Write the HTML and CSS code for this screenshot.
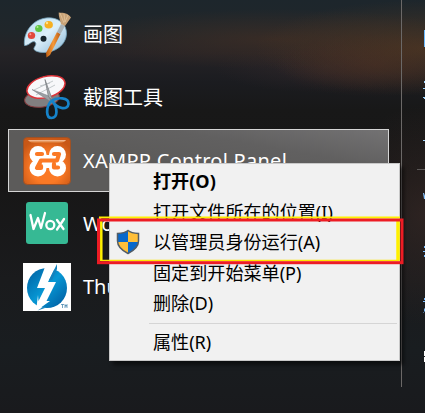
FILE: index.html
```html
<!DOCTYPE html>
<html lang="zh-CN">
<head>
<meta charset="utf-8">
<title>开始菜单</title>
<link rel="stylesheet" href="styles.css">
</head>
<body>
<div class="desktop">
  <main class="apps">
    <div class="app">
      <svg class="app-icon" viewBox="23 11 48 48">
        <defs>
          <linearGradient id="palette" x1="0" y1="0" x2="1" y2="1"><stop offset="0" stop-color="#b5dcf0"/><stop offset=".5" stop-color="#dceffa"/><stop offset="1" stop-color="#87b6d4"/></linearGradient>
          <linearGradient id="brush" x1="0" y1="0" x2="1" y2="0"><stop offset="0" stop-color="#bd5c10"/><stop offset=".5" stop-color="#f59a3a"/><stop offset="1" stop-color="#b95a14"/></linearGradient>
        </defs>
        <path d="M24.500 45.500C23 34 31 20 46 18C58 16.500 67 24 66.500 34C66 45 55 52.500 44 52.500C38 52.500 33 50.500 34 48C35 46 37 44 35 42C32 40 29 46 24.500 45.500Z" fill="url(#palette)" stroke="#719fb9" stroke-width=".8"/>
        <circle cx="43.500" cy="38.700" r="3" fill="#17242c"/>
        <ellipse cx="31.500" cy="35.500" rx="3.700" ry="3.500" fill="#e2483c"/><circle cx="30.300" cy="34.300" r="1" fill="#ffa197"/>
        <ellipse cx="38.800" cy="28.500" rx="3.700" ry="3.500" fill="#5ec342"/><circle cx="37.500" cy="27" r="1" fill="#b0ed91"/>
        <ellipse cx="48.700" cy="24.800" rx="4.200" ry="3.800" fill="#f6b022"/><circle cx="47" cy="23" r="1.200" fill="#ffe28b"/>
        <path d="M57 32L60.500 34L50 55L46.500 57.500L46 53Z" fill="url(#brush)"/>
        <path d="M61 24L65 26L60.500 34L57 32Z" fill="#a9b3b8"/>
        <path d="M61 24C60 20 58.500 16 58.700 12.500C64 13 68 13 71 17.500L65 26Z" fill="#c8a277"/>
        <path d="M60 13L64 23M64 14L65 22M68 15L65 22" stroke="#e2c59d" stroke-width=".8"/>
      </svg>
      <span class="app-name">画图</span>
    </div>
    <div class="app">
      <svg class="app-icon" viewBox="23 74 48 48">
        <ellipse cx="42" cy="98.500" rx="17.500" ry="8.500" transform="rotate(-8 42 98.500)" fill="#817f80" stroke="#863d40"/>
        <ellipse cx="46" cy="87" rx="19.500" ry="10.500" transform="rotate(-15 46 87)" fill="#f7f8fa" stroke="#dd3339" stroke-width="1.500"/>
        <path d="M34 90L53 81M36 95L55 85M40 86L50 83" stroke="#aeb4b8" stroke-width=".7" fill="none"/>
        <path d="M32 89.500L51 102L49 96Z" fill="#9b9fa3" stroke="#777b80" stroke-width=".5"/>
        <path d="M45 79.500L52.500 100L48.500 97Z" fill="#a6abad" stroke="#757a7e" stroke-width=".7"/>
        <path d="M51 101C45.500 108 46 118 51.500 118C58 118 58 108 52 100.500C58 110 68 110 68.500 104C69 97 57 97 51 101" fill="none" stroke="#1683ca" stroke-width="2.700"/>
      </svg>
      <span class="app-name">截图工具</span>
    </div>
    <div class="app selected">
      <svg class="app-icon" viewBox="0 0 48 48">
        <defs><radialGradient id="orange" cy=".65" r=".65"><stop offset=".5" stop-color="#fb7925"/><stop offset="1" stop-color="#c85716"/></radialGradient><linearGradient id="gloss" x2="0" y2="1"><stop stop-color="#f6c39f"/><stop offset="1" stop-color="#d7691d"/></linearGradient></defs>
        <rect x=".5" y=".5" width="47" height="47" rx="4" fill="url(#orange)" stroke="#9f5124"/>
        <path d="M5 3H43C41 6 37 6 34 6H14C10 6 7 6 5 3Z" fill="url(#gloss)"/>
        <g fill="#fff"><circle cx="15" cy="17.500" r="8.500"/><circle cx="34.500" cy="17.500" r="8.500"/><circle cx="15" cy="31" r="8.500"/><circle cx="34.500" cy="31" r="8.500"/><path d="M10 18H39V31H10Z"/></g>
        <path d="M14 17H19M31 17H36L34 23.500H18L14 31H18V29M35 30.500H31V27" fill="none" stroke="#fb7925" stroke-width="4.200" stroke-linejoin="round" stroke-linecap="round"/>
      </svg>
      <span class="app-name">XAMPP Control Panel</span>
    </div>
    <div class="app">
      <svg class="app-icon" viewBox="0 0 48 48">
        <rect x="3" y="2" width="42" height="42" rx="3" fill="#36b994"/>
        <g fill="none" stroke="#fff" stroke-width="2.300" stroke-linecap="round" stroke-linejoin="round"><path d="M7.500 15L10.500 29L15 18L18 28L22 13"/><ellipse cx="27.300" cy="25" rx="4" ry="4.200"/><path d="M34 20L40.500 29M41 19L34 29.500"/></g>
      </svg>
      <span class="app-name">Wox</span>
    </div>
    <div class="app">
      <svg class="app-icon" viewBox="0 0 48 48">
        <defs><linearGradient id="blue" x1="0" y1="0" x2="1" y2="1"><stop stop-color="#005e9f"/><stop offset=".5" stop-color="#0797d4"/><stop offset="1" stop-color="#00569b"/></linearGradient></defs>
        <path fill="#fff" d="M0 0H48V48H0Z"/>
        <circle cx="24" cy="25" r="20" fill="url(#blue)"/>
        <path d="M22 4L14 25H22L15.500 38L15 32L13 48L27 38L23.500 38L33 19H25L33 3Z" fill="#fff"/>
        <path d="M34 1L26 17H29L34 6ZM14.500 47.500L20 44L22 45Z" fill="#1382bd"/>
        <path d="M38 41.500H41M39.500 41.500V45M42 45V41.500L43 43.500L44 41.500V45" fill="none" stroke="#367ba7" stroke-width=".7"/>
      </svg>
      <span class="app-name">Thunder</span>
    </div>
  </main>
  <aside class="side">
    <svg class="side-edge" viewBox="401 0 24 413">
      <path d="M401.500 0V387" stroke="#6b6867"/>
      <path d="M417 169.500H425" stroke="#5d5958"/>
      <path d="M424 30H425V47H424Z" fill="#6abaff"/>
      <path d="M424 81H425V83H424ZM423 88H425V89H423ZM423 97H425V99H424V98H423ZM423 140H425V141H423Z" fill="#9ed6ff"/>
      <path d="M423 193H424L425 196V199H424Z" fill="#87c4ff"/>
      <path d="M424 246H425V248H424ZM423 251H425V252H423ZM424 255H425V257H424ZM424 298H425V300H424ZM423 301H425V302H423ZM424 309L425 308V311L423 313V312H424Z" fill="#79bdff"/>
      <path d="M424 351H425V356H424ZM424 357H425V362H424Z" fill="#fff"/>
    </svg>
  </aside>
  <div class="menu">
    <div class="item default">打开(O)</div>
    <div class="item">打开文件所在的位置(I)</div>
    <div class="item">
      <svg class="shield" viewBox="0 0 24 26">
        <defs><clipPath id="shield"><path d="M12 1.500C9 4 5 4.300 1.500 4.500V12C1.500 18 6 21.500 12 24.500C18 21.500 22.500 18 22.500 12V4.500C19 4.300 15 4 12 1.500Z"/></clipPath></defs>
        <g clip-path="url(#shield)"><path fill="#0868cb" d="M0 0H12V13H0ZM12 13H24V26H12Z"/><path fill="#ffbf39" d="M12 0H24V13H12ZM0 13H12V26H0Z"/></g>
        <path d="M12 1.500C9 4 5 4.300 1.500 4.500V12C1.500 18 6 21.500 12 24.500C18 21.500 22.500 18 22.500 12V4.500C19 4.300 15 4 12 1.500Z" fill="none" stroke="#535d66" stroke-width="1.500"/>
      </svg>
      以管理员身份运行(A)
    </div>
    <div class="item">固定到开始菜单(P)</div>
    <div class="item">删除(D)</div>
    <div class="separator"></div>
    <div class="item">属性(R)</div>
  </div>
  <svg class="marker" viewBox="96 215 310 51">
    <path d="M99 217.500H400" stroke="#fff000" stroke-width="2"/>
    <path d="M101.300 221V261" stroke="#fff000" stroke-width="2.500"/>
    <path d="M398 221V261" stroke="#fff000" stroke-width="3.500"/>
    <path d="M101 260.500H399" stroke="#ffe500" stroke-width="1.500"/>
    <rect x="98.500" y="220" width="303.500" height="42.700" fill="none" stroke="#ed1c24" stroke-width="3"/>
  </svg>
</div>
</body>
</html>
```
FILE: styles.css
```css
* { box-sizing: border-box; }
body { margin: 0; }
.desktop {
  position: relative;
  display: flex;
  width: 425px;
  height: 413px;
  overflow: hidden;
  font-family: "Noto Sans", "Noto Sans CJK SC", sans-serif;
  background:
    radial-gradient(ellipse 170px 48px at 425px 48px, rgba(82, 56, 34, .7), transparent),
    radial-gradient(ellipse 100px 32px at 375px 65px, rgba(74, 43, 35, .5), transparent),
    radial-gradient(ellipse 210px 30px at 275px 39px, rgba(68, 47, 36, .65), transparent),
    radial-gradient(ellipse 110px 25px at 325px 68px, rgba(55, 42, 44, .5), transparent),
    radial-gradient(ellipse 90px 110px at 425px 215px, rgba(56, 41, 38, .65), transparent),
    linear-gradient(#1d262c 0, #20262a 32px, #252326 53px, #1b1c20 82px, #181818 110px, #171616 180px, #1a1b1d 280px, #191d20 350px, #191a1d 413px);
}
.apps {
  display: flex;
  flex-direction: column;
  width: 401px;
  padding: 3px 12px 0 8px;
}
.app {
  display: flex;
  align-items: center;
  flex: none;
  height: 63px;
  padding: 1px 15px 0;
}
.selected {
  padding: 0 14px;
  background: linear-gradient(10deg, #5c5b5a 45%, #616060 70%, #737273);
  border: 1px solid #d5d5d5;
}
.app-icon { flex: none; width: 48px; height: 48px; }
.app-name {
  margin-left: 12px;
  color: #fff;
  font-size: 20px;
  line-height: 30px;
  white-space: nowrap;
}
.selected .app-name { letter-spacing: .28px; }
.side { width: 24px; }
.side-edge { display: block; width: 24px; height: 413px; }
.menu {
  position: absolute;
  left: 109px;
  top: 163px;
  width: 291px;
  height: 198px;
  padding: 2px 2px 3px;
  color: #000;
  background: #f1f1f1;
  border: 1px solid #c8c8c8;
  box-shadow: 4px 4px 4px rgba(0, 0, 0, .5);
}
.item {
  display: flex;
  align-items: center;
  height: 30.5px;
  padding-left: 41px;
  font-size: 18.1px;
  line-height: 30px;
  white-space: nowrap;
}
.default { font-weight: 700; }
.shield { width: 24px; height: 26px; margin: 0 13px 0 -37px; }
.separator { height: 1px; margin: 4px 0 3px 37px; background: #d5d5d5; }
.marker {
  position: absolute;
  left: 96px;
  top: 215px;
  width: 310px;
  height: 51px;
}
```
